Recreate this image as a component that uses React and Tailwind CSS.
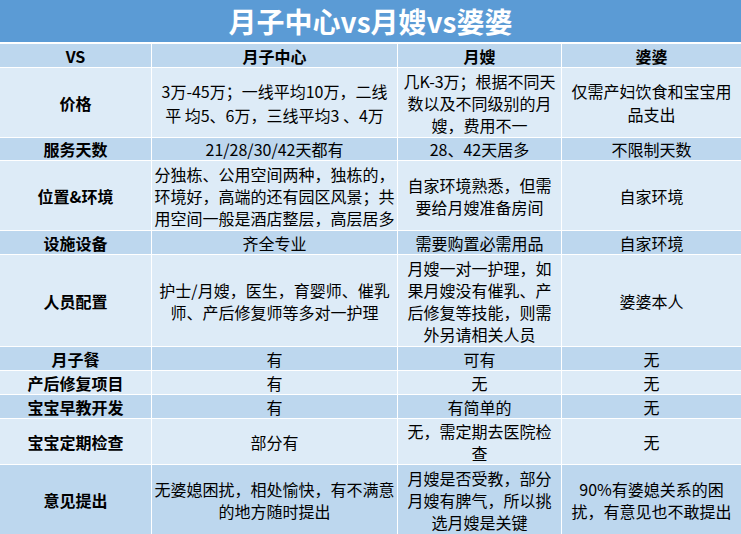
import React from "react";

const DARK = "bg-[#bdd7ee]";
const LIGHT = "bg-[#ddebf7]";

const rows = [
  { label: "VS", cells: [["月子中心"], ["月嫂"], ["婆婆"]], dark: true, header: true },
  {
    label: "价格",
    cells: [
      ["3万-45万；一线平均10万，二线", "平 均5、6万，三线平均3 、4万"],
      ["几K-3万；根据不同天", "数以及不同级别的月", "嫂，费用不一"],
      ["仅需产妇饮食和宝宝用", "品支出"],
    ],
    dark: false,
    lead: ["leading-[24px]", "leading-[22px]", "leading-[23px]"],
  },
  { label: "服务天数", cells: [["21/28/30/42天都有"], ["28、42天居多"], ["不限制天数"]], dark: true },
  {
    label: "位置&环境",
    cells: [
      ["分独栋、公用空间两种，独栋的，", "环境好，高端的还有园区风景；共", "用空间一般是酒店整层，高层居多"],
      ["自家环境熟悉，但需", "要给月嫂准备房间"],
      ["自家环境"],
    ],
    dark: false,
  },
  { label: "设施设备", cells: [["齐全专业"], ["需要购置必需用品"], ["自家环境"]], dark: true },
  {
    label: "人员配置",
    cells: [
      ["护士/月嫂，医生，育婴师、催乳", "师、产后修复师等多对一护理"],
      ["月嫂一对一护理，如", "果月嫂没有催乳、产", "后修复等技能，则需", "外另请相关人员"],
      ["婆婆本人"],
    ],
    dark: false,
  },
  { label: "月子餐", cells: [["有"], ["可有"], ["无"]], dark: true },
  { label: "产后修复项目", cells: [["有"], ["无"], ["无"]], dark: false },
  { label: "宝宝早教开发", cells: [["有"], ["有简单的"], ["无"]], dark: true },
  { label: "宝宝定期检查", cells: [["部分有"], ["无，需定期去医院检", "查"], ["无"]], dark: false },
  {
    label: "意见提出",
    cells: [
      ["无婆媳困扰，相处愉快，有不满意", "的地方随时提出"],
      ["月嫂是否受教，部分", "月嫂有脾气，所以挑", "选月嫂是关键"],
      ["90%有婆媳关系的困", "扰，有意见也不敢提出"],
    ],
    dark: true,
  },
];

export default function App() {
  return (
    <div
      className="w-[741px] h-[534px] bg-white overflow-hidden text-black"
      style={{ fontFamily: '"Noto Sans CJK SC", "Noto Sans", sans-serif' }}
    >
      <div className="h-[42px] bg-[#5b9bd5] flex items-center justify-center text-white font-bold text-[28px] leading-none mb-[2px]">
        月子中心vs月嫂vs婆婆
      </div>
      <div className="grid grid-cols-[151px_245px_163px_179px] grid-rows-[23px_69px_22px_69px_23px_91px_23px_23px_23px_45px_69px] gap-px">
        {rows.map((r, i) => (
          <React.Fragment key={i}>
            <div
              className={`${r.dark ? DARK : LIGHT} flex items-center justify-center font-bold text-[16px] leading-[22px] whitespace-nowrap`}
            >
              {r.label}
            </div>
            {r.cells.map((lines, j) => (
              <div
                key={j}
                className={`${r.dark ? DARK : LIGHT} flex flex-col items-center justify-center text-center text-[16px] ${
                  r.lead ? r.lead[j] : "leading-[22px]"
                } whitespace-pre ${r.header ? "font-bold" : ""}`}
              >
                {lines.map((l, k) => (
                  <div key={k}>{l}</div>
                ))}
              </div>
            ))}
          </React.Fragment>
        ))}
      </div>
    </div>
  );
}
